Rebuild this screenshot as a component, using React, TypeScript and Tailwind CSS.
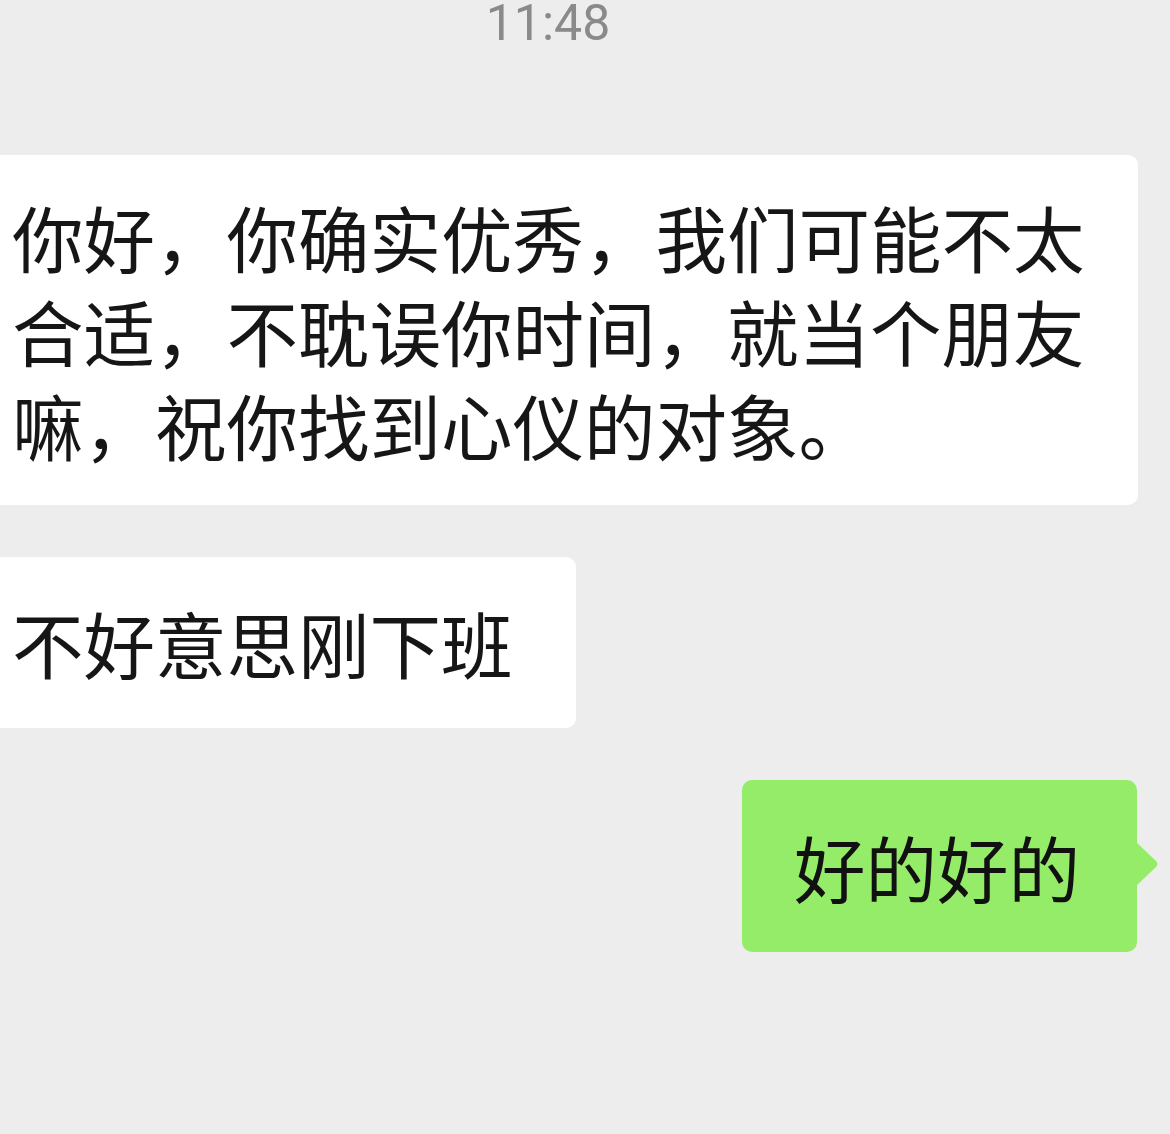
export default function App() {
  const cjk = { fontFamily: '"Noto Sans CJK SC", "Noto Sans", sans-serif' };
  return (
    <div className="w-[1170px] h-[1134px] bg-[#ededed] overflow-hidden flex flex-col">
      <div
        className="w-[1096px] h-[46px] text-center text-[50px] leading-[46px] text-[#8a8a8a]"
        style={{ fontFamily: 'Roboto, "Liberation Sans", sans-serif' }}
      >
        11:48
      </div>
      <div className="mt-[109px] flex flex-col gap-[52px]">
        <div
          className="w-[1138px] bg-white rounded-r-[10px] pl-[12px] pt-[34px] pb-[34px] text-[71.5px] leading-[94px] text-[#161616]"
          style={cjk}
        >
          <div className="whitespace-nowrap">你好，你确实优秀，我们可能不太</div>
          <div className="whitespace-nowrap">合适，不耽误你时间，就当个朋友</div>
          <div className="whitespace-nowrap">嘛，祝你找到心仪的对象。</div>
        </div>
        <div
          className="w-[576px] bg-white rounded-r-[10px] pl-[12px] py-[38px] text-[71.5px] leading-[95px] text-[#161616] whitespace-nowrap"
          style={cjk}
        >
          不好意思刚下班
        </div>
        <div className="flex justify-end pr-[33px]">
          <div
            className="relative w-[395px] h-[172px] bg-[#95ec69] rounded-[10px] pl-[52px] flex items-center text-[71.5px] leading-[94px] text-[#111] whitespace-nowrap"
            style={cjk}
          >
            好的好的
            <svg
              className="absolute left-[393px] top-[61px]"
              width="26"
              height="46"
              viewBox="0 0 26 46"
            >
              <path d="M0 0 L21 20 Q24 23 21 26 L0 46 Z" fill="#95ec69" />
            </svg>
          </div>
        </div>
      </div>
    </div>
  );
}
